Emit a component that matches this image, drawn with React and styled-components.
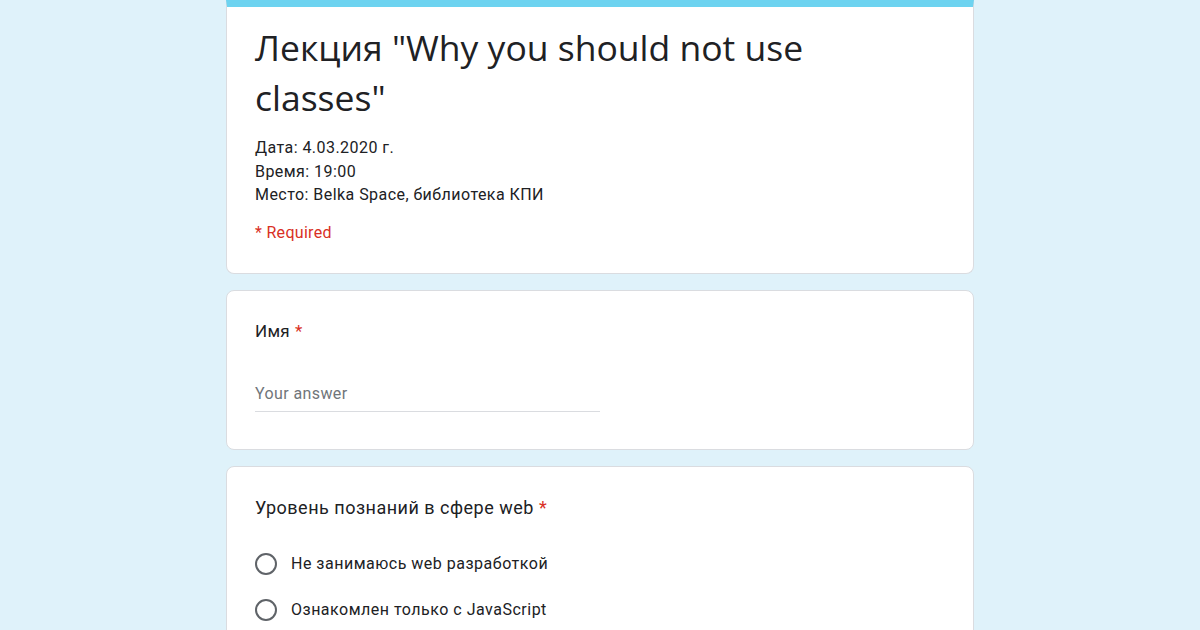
import React from "react";
import styled, { createGlobalStyle } from "styled-components";

const Global = createGlobalStyle`
  html, body { margin: 0; padding: 0; }
  body {
    background: #dff2fa;
    font-family: Roboto, "Noto Sans", Arial, sans-serif;
    color: #202124;
  }
`;

const Page = styled.div`
  width: 748px;
  margin: 0 auto;
  display: flex;
  flex-direction: column;
  gap: 16px;
  height: 630px;
  overflow: hidden;
`;

const Card = styled.section`
  background: #fff;
  border: 1px solid #dadce0;
  border-radius: ${(p) => (p.$top ? "0 0 8px 8px" : "8px")};
  border-top: ${(p) => (p.$top ? "7px solid #6dd3f0" : "1px solid #dadce0")};
  padding: ${(p) => p.$pad || "24px 28px"};
  flex-shrink: 0;
  box-sizing: border-box;
`;

const Title = styled.h1`
  margin: 0;
  font-family: "Open Sans", Roboto, sans-serif;
  font-weight: 400;
  font-size: 35.5px;
  line-height: 50px;
  color: #202124;
  width: 600px;
`;

const Meta = styled.div`
  margin-top: 14px;
  font-size: 16px;
  letter-spacing: 0.45px;
  line-height: 23.5px;
  color: #202124;
`;

const Required = styled.div`
  margin-top: 14px;
  font-size: 16px;
  letter-spacing: 0.3px;
  line-height: 24px;
  color: #d93025;
`;

const Question = styled.div`
  font-size: ${(p) => p.$size || "17px"};
  letter-spacing: ${(p) => p.$spacing || "0.3px"};
  line-height: 24px;
  color: #202124;
`;

const Star = styled.span`
  color: #d93025;
  margin-left: 5px;
`;

const AnswerInput = styled.div`
  margin-top: 41px;
  width: 345px;
  font-size: 16px;
  letter-spacing: 0.4px;
  line-height: 20px;
  color: #70757a;
  padding-bottom: 7px;
  border-bottom: 1px solid #dadce0;
`;

const Options = styled.div`
  margin-top: 33px;
  display: flex;
  flex-direction: column;
  gap: 24px;
`;

const Option = styled.label`
  display: flex;
  align-items: center;
  gap: 14px;
  font-size: 16px;
  letter-spacing: 0.5px;
  line-height: 22px;
  color: #202124;
`;

const Radio = styled.span`
  width: 18px;
  height: 18px;
  border: 2px solid #5f6368;
  border-radius: 50%;
  flex-shrink: 0;
`;

export default function App() {
  return (
    <>
      <Global />
      <Page>
        <Card $top $pad="15px 28px 28px">
          <Title>Лекция "Why you should not use classes"</Title>
          <Meta>
            Дата: 4.03.2020 г.<br />
            Время: 19:00<br />
            Место: Belka Space, библиотека КПИ
          </Meta>
          <Required>* Required</Required>
        </Card>
        <Card $pad="28px 28px 37px">
          <Question $size="17px">
            Имя<Star>*</Star>
          </Question>
          <AnswerInput>Your answer</AnswerInput>
        </Card>
        <Card $pad="29px 28px 38px">
          <Question $size="18px" $spacing="0.5px">
            Уровень познаний в сфере web<Star>*</Star>
          </Question>
          <Options>
            <Option>
              <Radio />
              Не занимаюсь web разработкой
            </Option>
            <Option>
              <Radio />
              Ознакомлен только с JavaScript
            </Option>
          </Options>
        </Card>
      </Page>
    </>
  );
}
